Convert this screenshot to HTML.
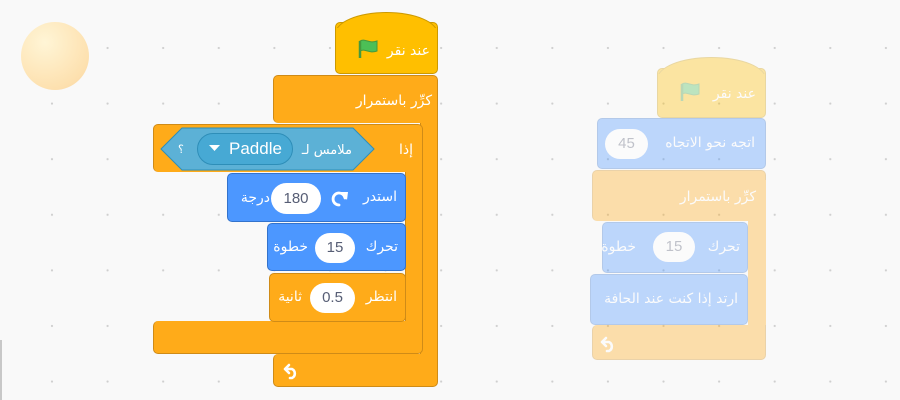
<!DOCTYPE html>
<html><head><meta charset="utf-8"><style>
html,body{margin:0;padding:0}
body{width:900px;height:400px;overflow:hidden;position:relative;background-color:#f9f9f9;
background-image:radial-gradient(circle,#cfcfcf 0.9px,transparent 1.3px);
background-size:55.6px 55.6px;background-position:24.2px 20.2px;
font-family:"DejaVu Sans","Liberation Sans",sans-serif;}
.b{position:absolute;box-sizing:border-box;border-radius:5px}
.t{position:absolute;color:#fff;font-size:14px;font-weight:normal;white-space:nowrap;direction:rtl}
.o{background:#ffab19;border:1px solid #cf8b17}
.y{background:#ffbf00;border:1px solid #cc9900}
.bl{background:#4c97ff;border:1px solid #3373cc}
.pill{position:absolute;background:#fff;border-radius:16px;color:#575e75;font-family:"Liberation Sans",sans-serif;font-size:15px;text-align:center;box-sizing:border-box}
.g{opacity:.35}
</style></head><body>
<div style="position:absolute;left:21px;top:22px;width:68px;height:68px;border-radius:50%;background:radial-gradient(circle at 35% 30%,#fff5d6,#fde1b0 70%,#fbd5a0)"></div>
<div style="position:absolute;left:0;top:340px;width:2px;height:60px;background:#c8c8c8"></div>

<!-- main forever -->
<div class="b o" style="left:420px;top:100px;width:18px;height:270px;border-radius:0 5px 5px 0"></div>
<div class="b o" style="left:273px;top:75px;width:165px;height:48px;border-bottom:none;border-radius:5px 5px 0 5px"></div>
<div class="b o" style="left:273px;top:354px;width:165px;height:33px;border-top:none;border-radius:5px 0 5px 5px"></div>
<div style="position:absolute;left:421px;top:110px;width:16px;height:260px;background:#ffab19"></div>
<div class="t" style="right:468px;top:93px">كرِّر باستمرار</div>
<svg style="position:absolute;left:283px;top:361px" width="20" height="20" viewBox="0 0 20 20"><path d="M6 4 L2 8 L6 12 M2 8 H9 A5 5 0 0 1 9 17 H7" fill="none" stroke="#fff" stroke-width="2.6" stroke-linecap="round" stroke-linejoin="round"/></svg>

<!-- if -->
<div class="b o" style="left:405px;top:150px;width:18px;height:190px;border-radius:0 5px 5px 0"></div>
<div class="b o" style="left:153px;top:124px;width:270px;height:48px;border-bottom:none;border-radius:5px 5px 0 5px"></div>
<div class="b o" style="left:153px;top:321px;width:270px;height:33px;border-top:none;border-radius:5px 0 5px 5px"></div>
<div style="position:absolute;left:406px;top:160px;width:16px;height:175px;background:#ffab19"></div>
<div class="t" style="right:487px;top:142px">إذا</div>
<svg style="position:absolute;left:160px;top:127px" width="215" height="44"><polygon points="1,22 22,1 193,1 214,22 193,43 22,43" fill="#5cb1d6" stroke="#2e8eb8"/></svg>
<div class="t" style="left:178px;top:143px;font-size:11px">؟</div>
<div style="position:absolute;left:197px;top:133px;width:96px;height:32px;border-radius:16px;background:#47a9d4;border:1px solid #2e8eb8;box-sizing:border-box"></div>
<svg style="position:absolute;left:209px;top:145px" width="12" height="8"><polygon points="0,0 11,0 5.5,6" fill="#fff"/></svg>
<div class="t" style="left:229px;top:139px;font-family:'Liberation Sans',sans-serif;font-size:17px">Paddle</div>
<div class="t" style="right:548px;top:143px;font-size:13px">ملامس لـ</div>

<div class="b bl" style="left:227px;top:173px;width:179px;height:49px"></div>
<div class="t" style="right:503px;top:189px">استدر</div>
<svg style="position:absolute;left:330px;top:189px" width="20" height="20" viewBox="0 0 20 20"><path d="M15 9 A6 6 0 1 0 9 16" fill="none" stroke="#fff" stroke-width="2.8" stroke-linecap="round"/><polygon points="11,3 18,3 17,11" fill="#fff"/></svg>
<div class="pill" style="left:271px;top:183px;width:50px;height:31px;line-height:31px">180</div>
<div class="t" style="right:630px;top:190px">درجة</div>

<div class="b bl" style="left:267px;top:223px;width:139px;height:48px"></div>
<div class="t" style="right:502px;top:239px">تحرك</div>
<div class="pill" style="left:315px;top:233px;width:40px;height:30px;line-height:30px">15</div>
<div class="t" style="right:592px;top:239px">خطوة</div>

<div class="b o" style="left:269px;top:273px;width:137px;height:49px"></div>
<div class="t" style="right:503px;top:289px">انتظر</div>
<div class="pill" style="left:310px;top:283px;width:45px;height:30px;line-height:30px">0.5</div>
<div class="t" style="right:598px;top:289px">ثانية</div>

<div class="b y" style="left:335px;top:22px;width:103px;height:52px;border-radius:5px"></div>
<div style="position:absolute;left:335px;top:12px;width:103px;height:30px;border-radius:52px 52px 0 0/22px 22px 0 0;background:#ffbf00;border:1px solid #cc9900;border-bottom:none;box-sizing:border-box"></div>
<div style="position:absolute;left:336px;top:28px;width:101px;height:16px;background:#ffbf00"></div>
<div class="t" style="right:470px;top:43px">عند نقر</div>
<svg style="position:absolute;left:357px;top:38px" width="24" height="22" viewBox="0 0 24 22"><path d="M3 3 C8 0 12 6 20 3 L20 13 C12 16 8 10 3 13 Z" fill="#4cbf56" stroke="#45993d"/><path d="M3 3 V20" stroke="#45993d" stroke-width="2.5"/></svg>

<!-- ghost stack -->
<div class="g">
<div class="b o" style="left:592px;top:170px;width:174px;height:51px;border-bottom:none;border-radius:5px 5px 0 5px"></div>
<div style="position:absolute;left:748px;top:180px;width:18px;height:160px;background:#ffab19"></div>
<div class="b o" style="left:592px;top:325px;width:174px;height:35px;border-top:none;border-radius:5px 0 5px 5px"></div>
<div class="t" style="right:144px;top:189px">كرِّر باستمرار</div>
<svg style="position:absolute;left:600px;top:334px" width="20" height="20" viewBox="0 0 20 20"><path d="M6 4 L2 8 L6 12 M2 8 H9 A5 5 0 0 1 9 17 H7" fill="none" stroke="#fff" stroke-width="2.6" stroke-linecap="round" stroke-linejoin="round"/></svg>
<div class="b bl" style="left:597px;top:118px;width:169px;height:51px"></div>
<div class="t" style="right:145px;top:135px">اتجه نحو الاتجاه</div>
<div class="pill" style="left:605px;top:129px;width:43px;height:30px;line-height:30px">45</div>
<div class="b bl" style="left:602px;top:222px;width:146px;height:51px"></div>
<div class="t" style="right:160px;top:239px">تحرك</div>
<div class="pill" style="left:653px;top:232px;width:42px;height:30px;line-height:30px">15</div>
<div class="t" style="right:264px;top:239px">خطوة</div>
<div class="b bl" style="left:590px;top:274px;width:158px;height:51px"></div>
<div class="t" style="right:162px;top:291px">ارتد إذا كنت عند الحافة</div>
<div class="b y" style="left:657px;top:68px;width:109px;height:50px"></div>
<div style="position:absolute;left:657px;top:57px;width:109px;height:30px;border-radius:55px 55px 0 0/22px 22px 0 0;background:#ffbf00;border:1px solid #cc9900;border-bottom:none;box-sizing:border-box"></div>
<div style="position:absolute;left:658px;top:74px;width:107px;height:14px;background:#ffbf00"></div>
<div class="t" style="right:144px;top:86px">عند نقر</div>
<svg style="position:absolute;left:679px;top:81px" width="24" height="22" viewBox="0 0 24 22"><path d="M3 3 C8 0 12 6 20 3 L20 13 C12 16 8 10 3 13 Z" fill="#4cbf56" stroke="#45993d"/><path d="M3 3 V20" stroke="#45993d" stroke-width="2.5"/></svg>
</div>
</body></html>
